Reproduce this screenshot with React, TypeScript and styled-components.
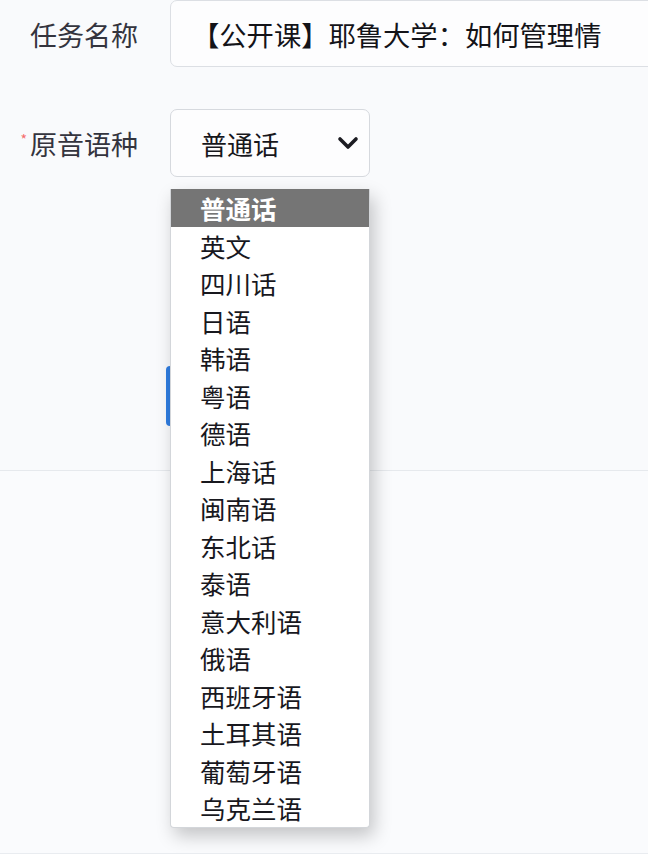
import React from "react";
import styled, { createGlobalStyle } from "styled-components";

const Global = createGlobalStyle`
  html, body { margin: 0; padding: 0; }
  body {
    background: #f9fafc;
    font-family: "Noto Sans CJK SC", "Noto Sans", sans-serif;
    overflow: hidden;
    width: 648px;
    height: 854px;
  }
`;

const Page = styled.div`
  width: 648px;
  height: 854px;
  display: flex;
  flex-direction: column;
  overflow: hidden;
  border-bottom: 1px solid #e9ecf0;
  box-sizing: border-box;
`;

const Form = styled.div`
  display: flex;
  flex-direction: column;
  padding-top: 1px;
`;

const Row = styled.div<{ $top?: number }>`
  display: grid;
  grid-template-columns: 138px auto;
  column-gap: 32px;
  align-items: center;
  margin-top: ${(p) => p.$top ?? 0}px;
`;

const Label = styled.label`
  text-align: right;
  font-size: 27px;
  color: #34343e;
  white-space: nowrap;
  position: relative;
`;

const Star = styled.span`
  color: #f56c6c;
  font-size: 14px;
  display: inline-block;
  vertical-align: middle;
  position: relative;
  top: -8px;
  margin-right: 3px;
`;

const TextInput = styled.div`
  width: 520px;
  height: 67px;
  box-sizing: border-box;
  border: 1px solid #dcdfe4;
  border-radius: 7px;
  background: #fdfdfe;
  display: flex;
  align-items: center;
  padding-left: 21px;
  font-size: 27.3px;
  color: #131318;
  white-space: nowrap;
  margin-top: -1px;
`;

const SelectWrap = styled.div`
  position: relative;
  width: 200px;
`;

const SelectBox = styled.div`
  width: 200px;
  height: 68px;
  box-sizing: border-box;
  border: 1px solid #d6d9de;
  border-radius: 7px;
  background: #fdfdfe;
  display: flex;
  align-items: center;
  justify-content: space-between;
  padding: 0 10px 0 30px;
  font-size: 26px;
  color: #17171c;
`;

const Menu = styled.ul`
  position: absolute;
  top: 80px;
  left: 0;
  width: 200px;
  margin: 0;
  padding: 0;
  list-style: none;
  background: #ffffff;
  border: 1px solid #d3d6da;
  border-top: none;
  box-sizing: border-box;
  border-radius: 0 0 4px 4px;
  box-shadow: 4px 8px 18px rgba(0, 0, 0, 0.22);
  z-index: 10;
`;

const Option = styled.li<{ $active?: boolean }>`
  height: 37.5px;
  line-height: 37.5px;
  padding-left: 29px;
  font-size: 25.5px;
  color: ${(p) => (p.$active ? "#ffffff" : "#18181e")};
  background: ${(p) => (p.$active ? "#757575" : "transparent")};
  font-weight: ${(p) => (p.$active ? 700 : 400)};
  white-space: nowrap;
`;

const ButtonRow = styled.div`
  margin-top: 189px;
  padding-left: 166px;
`;

const PrimaryButton = styled.div`
  width: 160px;
  height: 60px;
  border-radius: 4px;
  background: #2f7de1;
`;

const Divider = styled.div`
  margin-top: 44px;
  border-top: 1px solid #e6e9ed;
  flex: 1;
  background: #fafbfd;
`;

const options = [
  "普通话",
  "英文",
  "四川话",
  "日语",
  "韩语",
  "粤语",
  "德语",
  "上海话",
  "闽南语",
  "东北话",
  "泰语",
  "意大利语",
  "俄语",
  "西班牙语",
  "土耳其语",
  "葡萄牙语",
  "乌克兰语",
];

const Chevron = () => (
  <svg width="22" height="14" viewBox="0 0 22 14" aria-hidden>
    <polyline
      points="3,3 11,11 19,3"
      fill="none"
      stroke="#1c1c22"
      strokeWidth="3.6"
      strokeLinecap="round"
      strokeLinejoin="round"
    />
  </svg>
);

export default function App() {
  return (
    <>
      <Global />
      <Page>
        <Form>
          <Row>
            <Label>任务名称</Label>
            <TextInput>【公开课】耶鲁大学：如何管理情</TextInput>
          </Row>
          <Row $top={42}>
            <Label>
              <Star>*</Star>原音语种
            </Label>
            <SelectWrap>
              <SelectBox>
                <span>普通话</span>
                <Chevron />
              </SelectBox>
              <Menu>
                {options.map((o, i) => (
                  <Option key={o} $active={i === 0}>
                    {o}
                  </Option>
                ))}
              </Menu>
            </SelectWrap>
          </Row>
          <ButtonRow>
            <PrimaryButton />
          </ButtonRow>
        </Form>
        <Divider />
      </Page>
    </>
  );
}
